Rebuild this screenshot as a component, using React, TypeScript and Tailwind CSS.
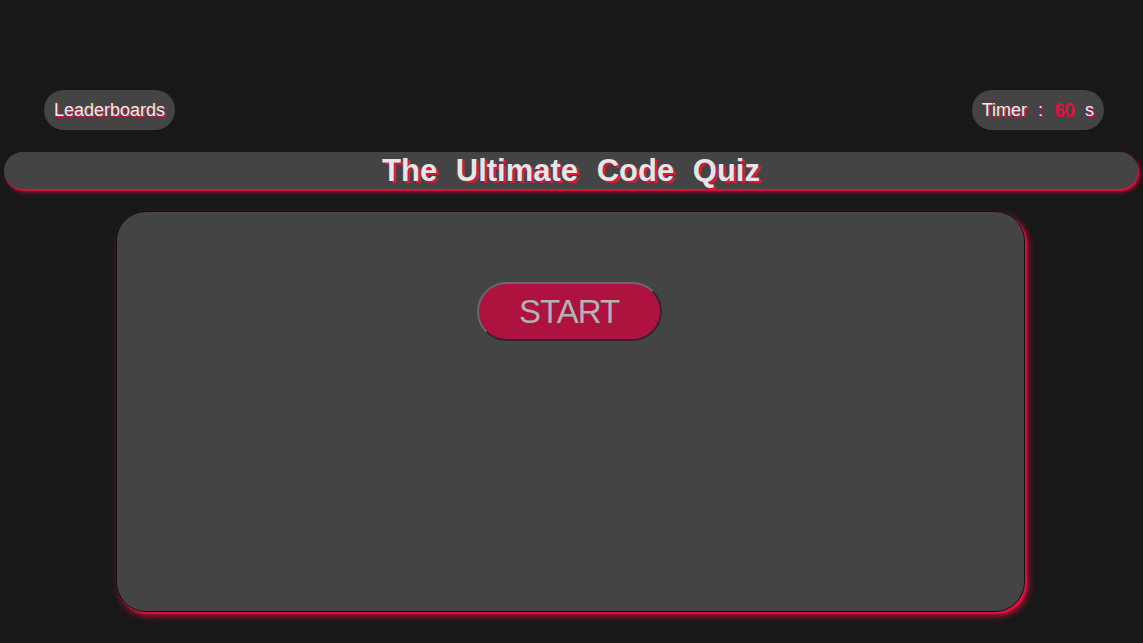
import React from "react";

export default function App() {
  const font = { fontFamily: '"Liberation Sans", Arial, sans-serif' };
  return (
    <div className="min-h-[643px] w-full bg-[#181818] pt-[90px]" style={font}>
      <div className="flex items-center justify-between pl-[44px] pr-[39px]">
        <div className="flex h-[40px] items-center rounded-full bg-[#444444] px-[10px] text-[18px] text-[#efefef] [text-shadow:1px_1px_0_#dc143c]">
          Leaderboards
        </div>
        <div className="flex h-[40px] items-center rounded-full bg-[#444444] px-[10px] text-[18px] text-[#efefef] [word-spacing:6px] [text-shadow:1px_1px_0_#dc143c]">
          <span>
            Timer : <span className="text-[#e0103c]">60</span> s
          </span>
        </div>
      </div>
      <div className="mt-[22px] ml-[4px] mr-[5px] flex h-[37px] items-center justify-center rounded-full bg-[#444444] shadow-[1px_2px_1px_#d8103c,2px_3px_4px_#b0102f]">
        <h1 className="text-[31px] font-bold leading-none text-[#e6e6e6] [word-spacing:10px] [text-shadow:2px_2px_0_#dc143c]">
          The Ultimate Code Quiz
        </h1>
      </div>
      <div className="mt-[22px] flex justify-center pr-[2px]">
        <div className="flex h-[401px] w-[909px] flex-col items-center rounded-[30px] border border-[#111] bg-[#444444] pt-[70px] shadow-[2px_2px_1px_#e0103c,3px_4px_7px_#c0103a]">
          <button className="-ml-[3px] flex h-[59px] w-[185px] items-center justify-center rounded-full border-2 border-[#6a6a6a] border-r-[#2a2a2a] border-b-[#2a2a2a] bg-[#ae123f] text-[33px] tracking-[-1px] text-[#b3b3b3]">
            START
          </button>
        </div>
      </div>
    </div>
  );
}
